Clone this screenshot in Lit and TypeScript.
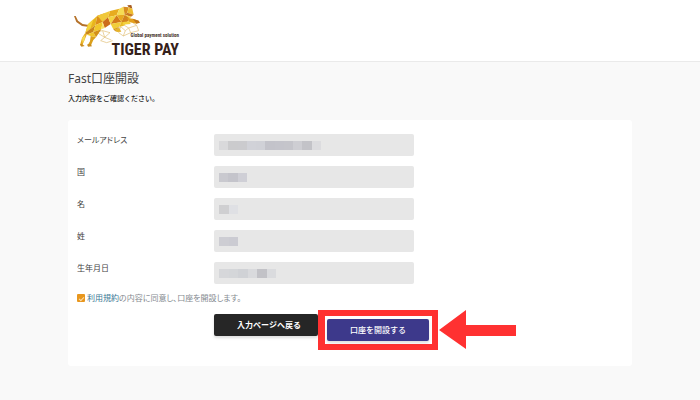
import { LitElement, html, svg, css } from "lit";
import { customElement } from "lit/decorators.js";

interface Field {
  id: string;
  label: string;
  width: number;
  blocks: string[];
}

const fields: Field[] = [
  { id: "mail", label: "メールアドレス", width: 102, blocks: ["#d9d9db", "#cbcbcd", "#cbcbce", "#d1d2d8", "#d0d1d7", "#c3c3ca", "#c4c4cb", "#c5c5cb", "#ceced3", "#c3c3c8", "#dcdcdf"] },
  { id: "country", label: "国", width: 28, blocks: ["#c9c9cf", "#c4c4cb", "#cfcfd6"] },
  { id: "first", label: "名", width: 19, blocks: ["#cfcfd1", "#dfe0e4"] },
  { id: "last", label: "姓", width: 19, blocks: ["#cdcdd3", "#cbcbd2"] },
  { id: "birth", label: "生年月日", width: 57, blocks: ["#d6d7da", "#d4d6d9", "#d0d2d6", "#d9dadd", "#c2c2c7", "#dadbde"] },
];

const facets: [string, string][] = [
  ["42,48 47,48 54,62 68,72 86,75 88,81 66,78 49,66", "#b5722a"],
  ["84,73 112,47 106,76 76,98", "#e8b51c"],
  ["84,73 100,58 92,84 76,98", "#f3d33c"],
  ["76,98 106,76 100,96 80,104", "#c9851b"],
  ["76,98 80,104 74,119 66,138 60,136 66,114", "#e5a81d"],
  ["66,114 76,104 74,119 68,130", "#f5da55"],
  ["80,104 100,96 108,112 92,108", "#efc62c"],
  ["92,108 108,112 100,120 92,138 82,137 90,124", "#dba01b"],
  ["60,132 66,132 74,138 64,140", "#c88c20"],
  ["82,133 92,132 96,139 84,140", "#c88c20"],
  ["112,47 134,40 128,66 106,76", "#dd8e18"],
  ["106,76 128,66 124,88 100,96", "#f1c72b"],
  ["100,96 124,88 108,112", "#d39018"],
  ["112,47 150,33 144,52 128,66", "#f0c83a"],
  ["128,66 144,52 152,72 134,84", "#cc6c1c"],
  ["128,66 134,84 124,88", "#f7df69"],
  ["150,33 178,26 170,46 144,52", "#e7ac20"],
  ["144,52 170,46 152,72", "#f3d441"],
  ["170,46 184,66 152,72", "#d47b19"],
  ["178,26 190,20 194,44 170,46", "#f5dc54"],
  ["170,46 194,44 184,66", "#e6a81f"],
  ["152,72 184,66 178,80 160,88", "#f1cd39"],
  ["160,88 178,80 166,94", "#c78018"],
  ["184,66 194,44 210,52 202,66", "#d2831c"],
  ["184,66 202,66 190,78 178,80", "#e9bb26"],
  ["190,20 206,22 202,38 194,44", "#d88c1e"],
  ["202,16 214,15 217,26 206,22", "#a85c20"],
  ["206,22 217,26 221,44 202,38", "#efbd2e"],
  ["202,38 221,44 213,50 194,44", "#c87821"],
  ["194,44 213,50 210,56", "#f4d34b"],
  ["202,54 218,56 236,62 230,71 206,66", "#e4a01c"],
  ["218,56 236,62 240,68 230,71", "#bf7419"],
  ["190,66 208,64 212,72 188,74", "#f3d13d"],
  ["162,86 178,84 184,95 170,96", "#e5b22b"],
];

@customElement("app-root")
export class AppRoot extends LitElement {
  static styles = css`
    :host {
      display: block;
      min-height: 100vh;
      background: #f9f9f9;
      color: #444;
      font-family: "Noto Sans", "Noto Sans CJK JP", sans-serif;
      font-size: 8px;
      line-height: 12px;
    }
    * {
      box-sizing: border-box;
    }
    header {
      padding: 3px 68px 0;
      background: #fff;
      border-bottom: 1px solid #eaeaea;
    }
    .logo {
      display: block;
    }
    .mesh {
      fill: none;
      stroke: #dfbd72;
      stroke-width: 2;
    }
    .tagline {
      font: bold 5px "Liberation Sans Narrow", "Roboto Condensed", "Liberation Sans", sans-serif;
      fill: #4b3a31;
    }
    .brand {
      font: bold 16px "Liberation Sans Narrow", "Roboto Condensed", "Liberation Sans", sans-serif;
      fill: #35211a;
    }
    main {
      padding: 8px 68px 32px;
    }
    h1 {
      margin: 0;
      font-size: 12px;
      line-height: 18px;
      font-weight: 400;
    }
    .lead {
      margin: 5px 0 15px;
      font-size: 7px;
      color: #222;
      font-weight: 500;
    }
    form {
      padding: 14px 9px 16px;
      background: #fff;
      border-radius: 3px;
    }
    .fields {
      display: grid;
      gap: 10px;
    }
    .row {
      display: grid;
      grid-template-columns: 137px minmax(0, 200px);
    }
    .row label,
    .agree {
      font-feature-settings: "palt";
    }
    .box {
      position: relative;
    }
    .box input {
      display: block;
      width: 100%;
      height: 22px;
      border: 0;
      border-radius: 2px;
      background: #e7e7e7;
    }
    .mosaic {
      position: absolute;
      left: 5px;
      top: 7px;
      display: flex;
      height: 9px;
    }
    .mosaic span {
      flex: 1;
    }
    .agree {
      display: flex;
      align-items: center;
      gap: 2px;
      margin-top: 8px;
      color: #858a90;
    }
    .agree input {
      appearance: none;
      flex: none;
      width: 8px;
      height: 8px;
      margin: 0;
      border-radius: 1px;
      background: #e8971e;
      display: grid;
      place-items: center;
    }
    .agree input:checked::before {
      content: "";
      width: 4px;
      height: 2px;
      border: solid #fbdcae;
      border-width: 0 0 1px 1px;
      rotate: -45deg;
    }
    a {
      color: #3a7896;
      text-decoration: none;
    }
    .actions {
      display: flex;
      align-items: flex-start;
      margin: 6px 0 0 137px;
    }
    button {
      height: 22px;
      padding: 0;
      border: 0;
      border-radius: 2px;
      color: #fff;
      font: bold 8px/12px "Noto Sans", "Noto Sans CJK JP", sans-serif;
      box-shadow: 0 2px 3px #0002;
    }
    .back {
      flex: 0 0 104px;
      margin-top: 4px;
      padding-left: 6px;
      background: #262626;
    }
    .frame {
      flex: 0 0 120px;
      display: grid;
      height: 40px;
      padding: 3px 3px 2px 2px;
      border: solid #ff3131;
      border-width: 6px 6px 6px 7px;
      background: #fff;
    }
    .open {
      background: #3d398b;
      font-weight: 500;
    }
    .arrow {
      flex: none;
      margin-left: 1px;
      fill: #ff3131;
    }
  `;

  private logo() {
    return html`<svg class="logo" width="112" height="58" viewBox="68 3 112 58" role="img" aria-label="TIGER PAY">
      <g transform="translate(60 0) scale(0.3333)">
        <path
          class="mesh"
          d="M108 96 L128 92 L150 98 L134 112 L108 96 M128 92 L134 112 L154 120 M134 112 L122 122 L140 128 L158 122 M166 94 L182 80 L196 92 L190 108 L212 98 L236 92 L230 76 L206 84 L212 98 M196 92 L206 84 L190 74 M182 80 L176 98 L190 108 M218 68 L230 76"
        />
        ${facets.map(([points, fill]) => svg`<polygon points=${points} fill=${fill}></polygon>`)}
      </g>
      <text class="tagline" x="179" y="37" text-anchor="end">Global payment solution</text>
      <text class="brand" x="179" y="55" text-anchor="end">TIGER PAY</text>
    </svg>`;
  }

  render() {
    return html`
      <header>${this.logo()}</header>
      <main>
        <h1>Fast口座開設</h1>
        <p class="lead">入力内容をご確認ください。</p>
        <form @submit=${(e: Event) => e.preventDefault()}>
          <div class="fields">
            ${fields.map(
              (f) => html`<div class="row">
                <label for=${f.id}>${f.label}</label>
                <div class="box">
                  <input id=${f.id} type="text" readonly />
                  <div class="mosaic" style="width:${f.width}px">
                    ${f.blocks.map((c) => html`<span style="background:${c}"></span>`)}
                  </div>
                </div>
              </div>`
            )}
          </div>
          <div class="agree">
            <input id="agree" type="checkbox" checked />
            <label for="agree"><a href="#terms">利用規約</a>の内容に同意し、口座を開設します。</label>
          </div>
          <div class="actions">
            <button class="back" type="button">入力ページへ戻る</button>
            <div class="frame"><button class="open" type="submit">口座を開設する</button></div>
            <svg class="arrow" width="78" height="40" viewBox="0 0 78 40" aria-hidden="true">
              <path d="M0 20 L27 0 V15 H77 V26 H27 V39 Z" />
            </svg>
          </div>
        </form>
      </main>
    `;
  }
}
